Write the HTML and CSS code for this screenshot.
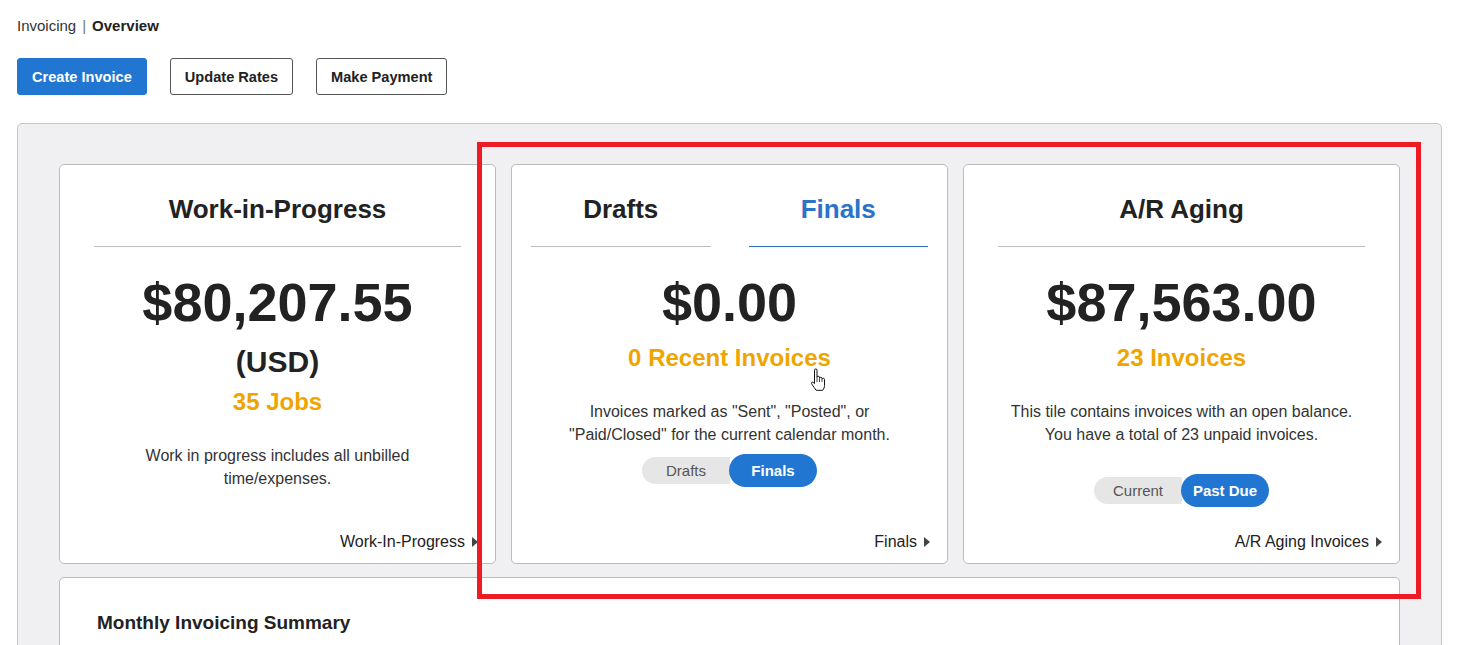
FILE: index.html
```html
<!DOCTYPE html>
<html lang="en">
<head>
  <meta charset="UTF-8" />
  <title>Invoicing Overview</title>
  <link rel="stylesheet" href="styles.css">
</head>
<body>

  <div class="crumbs">
    <span class="crumb">Invoicing</span>
    <span class="crumb-sep">|</span>
    <span class="crumb crumb-current">Overview</span>
  </div>

  <div class="actions">
    <button class="btn btn-primary">Create Invoice</button>
    <button class="btn btn-outline">Update Rates</button>
    <button class="btn btn-outline">Make Payment</button>
  </div>

  <div class="panel">
    <div class="tiles">

      <div class="tile">
        <div class="tile-head">
          <div class="tile-title">Work-in-Progress</div>
        </div>
        <div class="amount">$80,207.55</div>
        <div class="currency">(USD)</div>
        <div class="count count-tight">35 Jobs</div>
        <p class="desc">Work in progress includes all unbilled<br>time/expenses.</p>
        <a class="tile-link">Work-In-Progress <span class="caret"></span></a>
      </div>

      <div class="tile">
        <div class="tile-head tabs">
          <div class="tab">Drafts</div>
          <div class="tab tab-active">Finals</div>
        </div>
        <div class="amount">$0.00</div>
        <div class="count">0 Recent Invoices</div>
        <p class="desc">Invoices marked as "Sent", "Posted", or<br>"Paid/Closed" for the current calendar month.</p>
        <div class="toggle toggle-near">
          <span class="toggle-opt">Drafts</span>
          <span class="toggle-opt toggle-on">Finals</span>
        </div>
        <a class="tile-link">Finals <span class="caret"></span></a>
      </div>

      <div class="tile">
        <div class="tile-head">
          <div class="tile-title">A/R Aging</div>
        </div>
        <div class="amount">$87,563.00</div>
        <div class="count">23 Invoices</div>
        <p class="desc">This tile contains invoices with an open balance.<br>You have a total of 23 unpaid invoices.</p>
        <div class="toggle">
          <span class="toggle-opt">Current</span>
          <span class="toggle-opt toggle-on">Past Due</span>
        </div>
        <a class="tile-link">A/R Aging Invoices <span class="caret"></span></a>
      </div>

    </div>

    <div class="summary-card">
      <h3>Monthly Invoicing Summary</h3>
    </div>
  </div>

  <div class="highlight"></div>

  <svg class="pointer" width="18" height="24" viewBox="0 0 18 24">
    <path d="M5.5 13 V2.2 a1.25 1.25 0 0 1 2.5 0 V9.5 a1.25 1.25 0 0 1 2.5 0 V10.5 a1.25 1.25 0 0 1 2.5 0 V11.5 a1.25 1.25 0 0 1 2.5 0 V17.5 c0 2 -0.8 3.3 -1.8 4.8 H7.2 c-1.2 -1.6 -3 -4 -4.6 -6.6 c-0.6 -1 0.6 -2.1 1.5 -1.3 L5.5 15.6 Z"
          fill="#fff" stroke="#111" stroke-width="1" stroke-linejoin="round"/>
    <path d="M8 10 V14 M10.5 11 V14 M13 12 V14" stroke="#111" stroke-width="0.8" fill="none"/>
  </svg>

</body>
</html>
```

FILE: styles.css
```css
body {
  margin: 0;
  padding: 17px 39px 0 17px;
  font-family: "Liberation Sans", Arial, sans-serif;
  color: #222;
  background: #fff;
  overflow: hidden;
}
.crumbs {
  font-size: 15px;
  line-height: 18px;
  display: flex;
  gap: 6px;
}
.crumb { color: #333; }
.crumb-sep { color: #777; }
.crumb-current {
  font-weight: bold;
  color: #222;
}
.actions {
  display: flex;
  gap: 23px;
  margin-top: 23px;
}
.btn {
  height: 37px;
  padding: 0 14px;
  font-family: inherit;
  font-size: 14.6px;
  font-weight: bold;
  border-radius: 3px;
  cursor: pointer;
}
.btn-primary {
  background: #2176d2;
  border: 1px solid #2176d2;
  color: #fff;
}
.btn-outline {
  background: #fff;
  border: 1px solid #555;
  color: #222;
}
.panel {
  margin-top: 28px;
  background: #f0f0f2;
  border: 1px solid #c6c6c6;
  border-radius: 5px;
  padding: 40px 41px 0;
  height: 600px;
}
.tiles {
  display: grid;
  grid-template-columns: repeat(3, 1fr);
  gap: 15px;
}
.tile {
  height: 400px;
  box-sizing: border-box;
  background: #fff;
  border: 1px solid #bbb;
  border-radius: 5px;
  padding: 0 34px 11px;
  display: flex;
  flex-direction: column;
  align-items: stretch;
  text-align: center;
}
.tile-head {
  padding: 29px 0 22px;
  border-bottom: 1px solid #bbb;
}
.tile-title {
  font-size: 26px;
  line-height: 30px;
  font-weight: bold;
  color: #222;
}
.tabs {
  display: flex;
  gap: 38px;
  border-bottom: none;
  padding: 0;
  margin: 0 -15px;
}
.tab {
  flex: 1;
  padding: 29px 0 22px;
  font-size: 26px;
  line-height: 30px;
  font-weight: bold;
  border-bottom: 1px solid #bbb;
}
.tab-active {
  color: #2a73c8;
  border-bottom-color: #2a6db8;
}
.amount {
  margin-top: 24px;
  font-size: 54px;
  line-height: 62px;
  font-weight: bold;
  color: #222;
}
.currency {
  margin-top: 11px;
  font-size: 30px;
  line-height: 36px;
  font-weight: bold;
}
.count {
  margin-top: 11px;
  font-size: 24px;
  line-height: 28px;
  font-weight: bold;
  color: #efa500;
}
.count-tight { margin-top: 8px; }
.desc {
  margin: 28px 0 0;
  font-size: 16px;
  line-height: 23px;
  color: #333;
}
.toggle {
  align-self: center;
  display: flex;
  align-items: center;
  height: 33px;
  margin-top: 28px;
}
.toggle-near { margin-top: 8px; }
.toggle-opt {
  width: 88px;
  height: 27px;
  line-height: 27px;
  font-size: 15px;
  color: #555;
  background: #e6e6e6;
  border-radius: 14px 0 0 14px;
}
.toggle-on {
  height: 33px;
  line-height: 33px;
  margin-left: -1px;
  background: #2176d2;
  color: #fff;
  font-weight: bold;
  border-radius: 17px;
}
.tile-link {
  margin-top: auto;
  margin-right: -17px;
  align-self: flex-end;
  font-size: 16px;
  line-height: 20px;
  color: #222;
  display: flex;
  align-items: center;
  gap: 7px;
}
.caret {
  width: 0;
  height: 0;
  border-top: 5px solid transparent;
  border-bottom: 5px solid transparent;
  border-left: 6px solid #444;
}
.summary-card {
  margin-top: 13px;
  height: 200px;
  background: #fff;
  border: 1px solid #bbb;
  border-radius: 5px;
  padding: 34px 37px;
}
.summary-card h3 {
  margin: 0;
  font-size: 19px;
  line-height: 22px;
  color: #222;
}
.highlight {
  position: absolute;
  left: 477px;
  top: 142px;
  width: 944px;
  height: 457px;
  box-sizing: border-box;
  border: 5px solid #ed1c24;
  pointer-events: none;
}
.pointer {
  position: absolute;
  left: 809px;
  top: 368px;
}
```
